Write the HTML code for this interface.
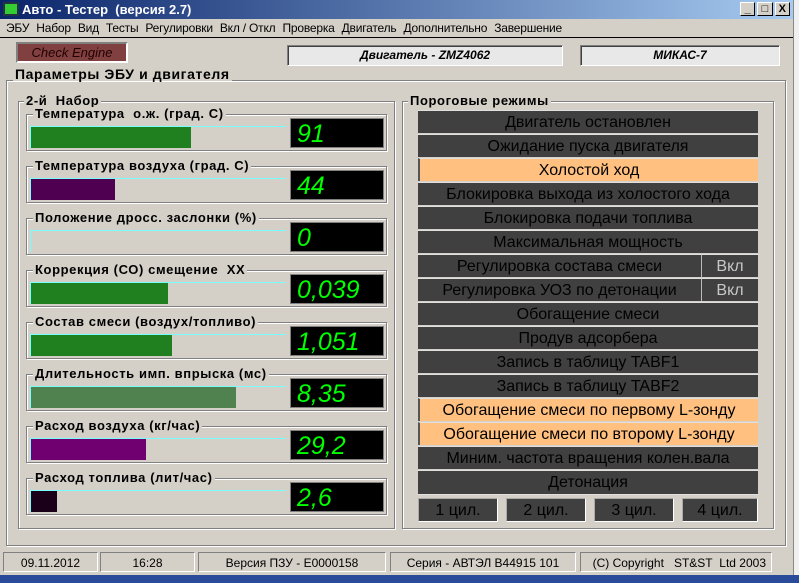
<!DOCTYPE html>
<html><head><meta charset="utf-8"><style>
*{margin:0;padding:0;box-sizing:border-box}
body{width:799px;height:583px;overflow:hidden;background:#fff;font-family:"Liberation Sans",sans-serif;position:relative}
.a{position:absolute}
.win{left:0;top:0;width:793px;height:575px;background:#d4d0c8}
.title{left:0;top:0;width:793px;height:19px;background:linear-gradient(90deg,#0a246a,#a6caf0);color:#fff;font-weight:bold;font-size:13px;line-height:19px;padding-left:22px}
.menu{top:19px;left:0;width:793px;height:19px;font-size:12px;line-height:19px;border-bottom:1px solid #000;letter-spacing:-0.2px}
.menu span{margin-left:6px;margin-right:1px}
.grp{border:1px solid #808080;box-shadow:1px 1px 0 #fff inset,1px 1px 0 #fff}
.lbl{background:#d4d0c8;font-size:13px;padding:0 2px;line-height:14px;color:#000;font-weight:bold;letter-spacing:0.6px}
.sunk{border:1px solid;border-color:#808080 #fff #fff #808080;box-shadow:inset 1px 1px 0 #404040}
.it{border:1px solid #808080;box-shadow:1px 1px 0 #fff inset,1px 1px 0 #fff;left:26px;width:361px;height:37px}
.bar{left:3px;top:11px;width:256px;height:22px;border-top:1px solid #7ff;border-left:1px solid #7ff}
.bar div{height:21px}
.disp{left:263px;top:3px;width:94px;height:30px;background:#000;color:#00ff00;font-style:italic;font-size:25px;line-height:30px;padding-left:6px;border:1px solid #808080}
.row{left:418px;width:340px;height:23px;background:#404040;color:#000;font-size:16px;line-height:23px;text-align:center;border-top:1px solid #e0e0e0}
.or{background:#ffc080;color:#000;border-left:2px solid #555}
.cyl{top:498px;height:24px;background:#404040;color:#000;font-size:16px;line-height:24px;text-align:center;border:1px solid #fff;border-color:#aaa #fff #fff #aaa}
.st{top:552px;height:20px;font-size:12px;line-height:20px;text-align:center;border:1px solid;border-color:#808080 #fff #fff #808080}
</style></head><body>
<div class="a win"></div>
<div class="a title">Авто - Тестер&nbsp; (версия 2.7)</div>
<div class="a" style="left:3px;top:2px;width:16px;height:14px;background:#3c3;border:2px solid #234"></div>
<div class="a" style="left:740px;top:2px;width:50px;height:15px;display:flex;gap:2px">
<div style="width:16px;height:14px;background:#d4d0c8;border:1px solid;border-color:#fff #000 #000 #fff;font-size:11px;font-weight:bold;text-align:center;line-height:12px">_</div>
<div style="width:16px;height:14px;background:#d4d0c8;border:1px solid;border-color:#fff #000 #000 #fff;font-size:11px;text-align:center;line-height:12px">□</div>
<div style="width:16px;height:14px;background:#d4d0c8;border:1px solid;border-color:#fff #000 #000 #fff;font-size:11px;font-weight:bold;text-align:center;line-height:12px">X</div></div>
<div class="a menu"><span>ЭБУ</span><span>Набор</span><span>Вид</span><span>Тесты</span><span>Регулировки</span><span>Вкл / Откл</span><span>Проверка</span><span>Двигатель</span><span>Дополнительно</span><span>Завершение</span></div>
<div class="a" style="left:16px;top:42px;width:112px;height:21px;background:#804040;border:2px solid;border-color:#808080 #fff #fff #808080;font-style:italic;font-size:13px;line-height:17px;text-align:center;color:#200">Check Engine</div>
<div class="a sunk" style="left:287px;top:45px;width:276px;height:21px;background:#e8e8e8;font-style:italic;font-weight:bold;font-size:12px;line-height:19px;text-align:center">Двигатель - ZMZ4062</div>
<div class="a sunk" style="left:580px;top:45px;width:200px;height:21px;background:#e8e8e8;font-style:italic;font-weight:bold;font-size:12px;line-height:19px;text-align:center">МИКАС-7</div>

<div class="a grp" style="left:6px;top:80px;width:780px;height:466px"></div>
<div class="a lbl" style="left:13px;top:67px;font-size:14px">Параметры ЭБУ и двигателя</div>
<div class="a grp" style="left:18px;top:101px;width:377px;height:428px"></div>
<div class="a lbl" style="left:24px;top:94px">2-й&nbsp; Набор</div>
<div class="a grp" style="left:402px;top:101px;width:372px;height:428px"></div>
<div class="a lbl" style="left:408px;top:94px">Пороговые режимы</div>

<div class="a it" style="top:114px"><div class="a lbl" style="left:6px;top:-8px">Температура&nbsp; о.ж. (град. С)</div><div class="a bar"><div style="width:160px;background:#208020"></div></div><div class="a disp">91</div></div>
<div class="a it" style="top:166px"><div class="a lbl" style="left:6px;top:-8px">Температура воздуха (град. С)</div><div class="a bar"><div style="width:84px;background:#500050"></div></div><div class="a disp">44</div></div>
<div class="a it" style="top:218px"><div class="a lbl" style="left:6px;top:-8px">Положение дросс. заслонки (%)</div><div class="a bar"><div style="width:0"></div></div><div class="a disp">0</div></div>
<div class="a it" style="top:270px"><div class="a lbl" style="left:6px;top:-8px">Коррекция (СО) смещение&nbsp; ХХ</div><div class="a bar"><div style="width:137px;background:#208020"></div></div><div class="a disp">0,039</div></div>
<div class="a it" style="top:322px"><div class="a lbl" style="left:6px;top:-8px">Состав смеси (воздух/топливо)</div><div class="a bar"><div style="width:141px;background:#208020"></div></div><div class="a disp">1,051</div></div>
<div class="a it" style="top:374px"><div class="a lbl" style="left:6px;top:-8px">Длительность имп. впрыска (мс)</div><div class="a bar"><div style="width:205px;background:#4f824f"></div></div><div class="a disp">8,35</div></div>
<div class="a it" style="top:426px"><div class="a lbl" style="left:6px;top:-8px">Расход воздуха (кг/час)</div><div class="a bar"><div style="width:115px;background:#700070"></div></div><div class="a disp">29,2</div></div>
<div class="a it" style="top:478px"><div class="a lbl" style="left:6px;top:-8px">Расход топлива (лит/час)</div><div class="a bar"><div style="width:26px;background:#1a0018"></div></div><div class="a disp">2,6</div></div>

<div class="a row" style="top:110px">Двигатель остановлен</div>
<div class="a row" style="top:134px">Ожидание пуска двигателя</div>
<div class="a row or" style="top:158px">Холостой ход</div>
<div class="a row" style="top:182px">Блокировка выхода из холостого хода</div>
<div class="a row" style="top:206px">Блокировка подачи топлива</div>
<div class="a row" style="top:230px">Максимальная мощность</div>
<div class="a row" style="top:254px;width:284px;border-right:1px solid #bbb">Регулировка состава смеси</div>
<div class="a row" style="top:254px;left:702px;width:56px;color:#c8c8c8">Вкл</div>
<div class="a row" style="top:278px;width:284px;border-right:1px solid #bbb">Регулировка УОЗ по детонации</div>
<div class="a row" style="top:278px;left:702px;width:56px;color:#c8c8c8">Вкл</div>
<div class="a row" style="top:302px">Обогащение смеси</div>
<div class="a row" style="top:326px">Продув адсорбера</div>
<div class="a row" style="top:350px">Запись в таблицу TABF1</div>
<div class="a row" style="top:374px">Запись в таблицу TABF2</div>
<div class="a row or" style="top:398px">Обогащение смеси по первому L-зонду</div>
<div class="a row or" style="top:422px">Обогащение смеси по второму L-зонду</div>
<div class="a row" style="top:446px">Миним. частота вращения колен.вала</div>
<div class="a row" style="top:470px;border-bottom:1px solid #e0e0e0;height:25px">Детонация</div>
<div class="a cyl" style="left:418px;width:80px">1 цил.</div>
<div class="a cyl" style="left:506px;width:80px">2 цил.</div>
<div class="a cyl" style="left:594px;width:80px">3 цил.</div>
<div class="a cyl" style="left:682px;width:76px">4 цил.</div>

<div class="a st" style="left:3px;width:95px">09.11.2012</div>
<div class="a st" style="left:100px;width:95px">16:28</div>
<div class="a st" style="left:198px;width:188px">Версия ПЗУ - E0000158</div>
<div class="a st" style="left:390px;width:186px">Серия - АВТЭЛ В44915 101</div>
<div class="a st" style="left:580px;width:192px;text-align:right;padding-right:5px">(C) Copyright&nbsp;&nbsp; ST&amp;ST&nbsp; Ltd 2003</div>
<div class="a" style="left:0;top:575px;width:799px;height:8px;background:#2a4a9a"></div>
<div class="a" style="left:793px;top:0;width:6px;height:575px;background:#f0f0f0;border-left:1px solid #888"></div>
</body></html>
